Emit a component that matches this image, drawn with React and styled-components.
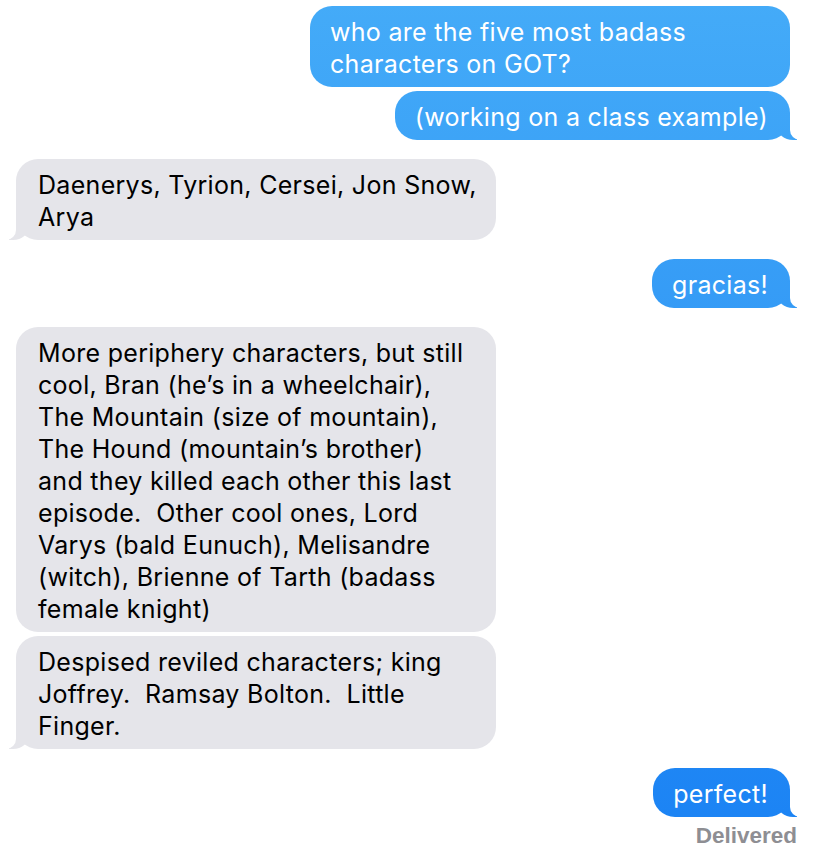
import React from 'react';
import styled, { createGlobalStyle, css } from 'styled-components';

const GlobalStyle = createGlobalStyle`
  html, body {
    margin: 0;
    padding: 0;
    background: #ffffff;
  }
  body {
    font-family: Inter, "Liberation Sans", Arial, sans-serif;
    -webkit-font-smoothing: antialiased;
  }
`

const BLUE = 'linear-gradient(to bottom, #44abf8 0px, #2f95f5 430px, #1a82f4 856px) fixed'
const GREY = '#e5e5ea'

const Thread = styled.div`
  width: 818px;
  height: 856px;
  box-sizing: border-box;
  padding: 6px 28px 0 16px;
  display: flex;
  flex-direction: column;
  overflow: hidden;
`
const Group = styled.div`
  display: flex;
  flex-direction: column;
  align-items: ${p => (p.$me ? 'flex-end' : 'flex-start')};
  gap: 4px;
  margin-bottom: 19px;
`
const tailMe = css`
  &::before {
    content: '';
    position: absolute;
    bottom: 0;
    right: -7px;
    width: 20px;
    height: 25px;
    background: ${BLUE};
    border-bottom-left-radius: 16px 14px;
  }
  &::after {
    content: '';
    position: absolute;
    bottom: 0;
    right: -26px;
    width: 26px;
    height: 25px;
    background: #ffffff;
    border-bottom-left-radius: 10px;
  }
`
const tailThem = css`
  &::before {
    content: '';
    position: absolute;
    bottom: 0;
    left: -7px;
    width: 20px;
    height: 25px;
    background: ${GREY};
    border-bottom-right-radius: 16px 14px;
  }
  &::after {
    content: '';
    position: absolute;
    bottom: 0;
    left: -26px;
    width: 26px;
    height: 25px;
    background: #ffffff;
    border-bottom-right-radius: 10px;
  }
`
const Bubble = styled.div`
  position: relative;
  box-sizing: border-box;
  width: ${p => (p.$wide ? '480px' : 'auto')};
  padding: ${p => (p.$me ? '10px 22px 7px 20px' : '10px 20px 7px 22px')};
  border-radius: 22px;
  font-size: 25px;
  line-height: 32px;
  letter-spacing: 0.3px;
  white-space: nowrap;
  color: ${p => (p.$me ? '#ffffff' : '#000000')};
  background: ${p => (p.$me ? BLUE : GREY)};
  ${p => p.$tail && (p.$me ? tailMe : tailThem)}
`
const Text = styled.span`
  position: relative;
  z-index: 1;
`
const Status = styled.div`
  align-self: flex-end;
  margin: -13px -7px 0 0;
  font-family: "Liberation Sans", Arial, sans-serif;
  font-weight: 700;
  font-size: 22.5px;
  line-height: 26px;
  color: #8e8e93;
`

const messages = [
  {
    me: true,
    bubbles: [
      ['who are the five most badass', 'characters on GOT?'],
      ['(working on a class example)'],
    ],
  },
  {
    me: false,
    bubbles: [['Daenerys, Tyrion, Cersei, Jon Snow,', 'Arya']],
  },
  { me: true, bubbles: [['gracias!']] },
  {
    me: false,
    bubbles: [
      [
        'More periphery characters, but still',
        'cool, Bran (he\u2019s in a wheelchair),',
        'The Mountain (size of mountain),',
        'The Hound (mountain\u2019s brother)',
        'and they killed each other this last',
        'episode.\u00a0 Other cool ones, Lord',
        'Varys (bald Eunuch), Melisandre',
        '(witch), Brienne of Tarth (badass',
        'female knight)',
      ],
      [
        'Despised reviled characters; king',
        'Joffrey.\u00a0 Ramsay Bolton.\u00a0 Little',
        'Finger.',
      ],
    ],
  },
  { me: true, bubbles: [['perfect!']] },
]

function App () {
  return (
    <>
      <GlobalStyle />
      <Thread>
        {messages.map((g, gi) => (
          <Group key={gi} $me={g.me}>
            {g.bubbles.map((lines, bi) => (
              <Bubble
                key={bi}
                $me={g.me}
                $wide={lines.length > 1}
                $tail={bi === g.bubbles.length - 1}
              >
                <Text>
                  {lines.map((l, li) => (
                    <React.Fragment key={li}>
                      {li > 0 && <br />}
                      {l}
                    </React.Fragment>
                  ))}
                </Text>
              </Bubble>
            ))}
          </Group>
        ))}
        <Status>Delivered</Status>
      </Thread>
    </>
  )
}

export default App;
